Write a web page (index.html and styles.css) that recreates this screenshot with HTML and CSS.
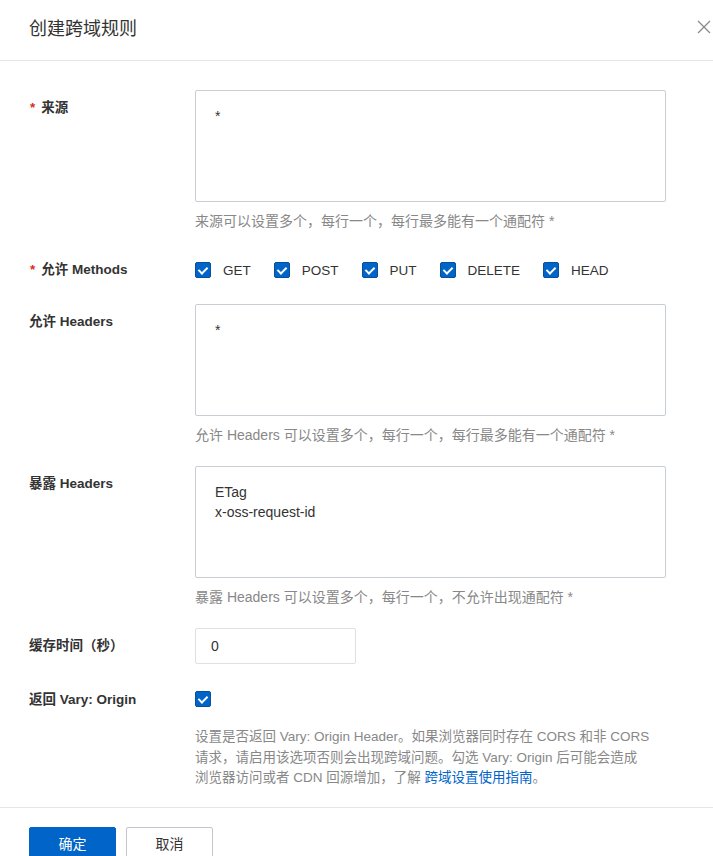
FILE: index.html
```html
<!DOCTYPE html>
<html lang="zh-CN">
<head>
  <meta charset="UTF-8">
  <meta name="viewport" content="width=device-width, initial-scale=1.0">
  <title>创建跨域规则</title>
  <link rel="stylesheet" href="styles.css">
</head>
<body>
  <div class="dialog">
    <div class="dialog-header">
      <h2>创建跨域规则</h2>
      <span class="close">
        <svg width="14" height="14" viewBox="0 0 14 14"><path d="M1 1L13 13M13 1L1 13" stroke="#8a8a8a" stroke-width="1.3" fill="none"/></svg>
      </span>
    </div>

    <div class="dialog-body">
      <div class="form-item">
        <label class="label required">来源</label>
        <div class="control">
          <div class="textarea">*</div>
          <div class="help">来源可以设置多个，每行一个，每行最多能有一个通配符 *</div>
        </div>
      </div>

      <div class="form-item row methods">
        <label class="label required">允许 Methods</label>
        <div class="control checks">
          <span class="check"><i class="box"></i>GET</span>
          <span class="check"><i class="box"></i>POST</span>
          <span class="check"><i class="box"></i>PUT</span>
          <span class="check"><i class="box"></i>DELETE</span>
          <span class="check"><i class="box"></i>HEAD</span>
        </div>
      </div>

      <div class="form-item">
        <label class="label">允许 Headers</label>
        <div class="control">
          <div class="textarea">*</div>
          <div class="help">允许 Headers 可以设置多个，每行一个，每行最多能有一个通配符 *</div>
        </div>
      </div>

      <div class="form-item">
        <label class="label">暴露 Headers</label>
        <div class="control">
          <div class="textarea">ETag<br>x-oss-request-id</div>
          <div class="help">暴露 Headers 可以设置多个，每行一个，不允许出现通配符 *</div>
        </div>
      </div>

      <div class="form-item">
        <label class="label">缓存时间（秒）</label>
        <div class="control">
          <div class="input">0</div>
        </div>
      </div>

      <div class="form-item row last">
        <label class="label">返回 Vary: Origin</label>
        <div class="control">
          <span class="check"><i class="box"></i></span>
        </div>
      </div>
      <div class="form-item note">
        <div class="label"></div>
        <div class="control">
          <p class="desc">设置是否返回 Vary: Origin Header。如果浏览器同时存在 CORS 和非 CORS<br>请求，请启用该选项否则会出现跨域问题。勾选 Vary: Origin 后可能会造成<br>浏览器访问或者 CDN 回源增加，了解 <a href="#">跨域设置使用指南</a>。</p>
        </div>
      </div>
    </div>

    <div class="dialog-footer">
      <button class="btn primary">确定</button>
      <button class="btn">取消</button>
    </div>
  </div>
</body>
</html>
```

FILE: styles.css
```css
body {
  margin: 0;
  background: #fff;
  color: #333;
  font-family: "Liberation Sans", "Noto Sans CJK SC", sans-serif;
  font-size: 14px;
}
.dialog {
  width: 713px;
  height: 856px;
  overflow: hidden;
}
.dialog-header {
  display: flex;
  justify-content: space-between;
  align-items: center;
  height: 60px;
  padding: 0 2px 0 29px;
  border-bottom: 1px solid #e6e6e6;
}
.dialog-header h2 {
  margin: 0 0 7px;
  font-size: 18px;
  font-weight: normal;
  color: #333;
}
.close {
  display: flex;
  margin-bottom: 6px;
}
.dialog-body {
  padding: 29px 47px 0 29px;
}
.form-item {
  display: flex;
  margin-bottom: 18px;
}
.label {
  width: 166px;
  flex-shrink: 0;
  line-height: 36px;
  font-size: 13.5px;
  font-weight: 600;
  color: #333;
}
.label.required::before {
  content: "*";
  color: #d93026;
  margin: 0 6px 0 1px;
}
.control {
  flex: 1;
}
.textarea {
  height: 112px;
  box-sizing: border-box;
  border: 1px solid #c9ced4;
  border-radius: 2px;
  padding: 15px 19px;
  line-height: 20px;
  font-size: 14px;
  color: #333;
}
.help {
  padding: 9px 0 3px;
  line-height: 20px;
  font-size: 14px;
  color: #888;
}
.input {
  width: 161px;
  height: 36px;
  box-sizing: border-box;
  border: 1px solid #e0e0e0;
  border-radius: 2px;
  padding: 0 15px;
  line-height: 34px;
  color: #333;
}
.row {
  height: 36px;
  align-items: center;
}
.form-item.methods {
  margin-bottom: 16px;
}
.checks {
  display: flex;
  align-items: center;
}
.check {
  display: inline-flex;
  align-items: center;
  margin-right: 23px;
  font-size: 13.5px;
  color: #333;
}
.box {
  position: relative;
  width: 16px;
  height: 16px;
  box-sizing: border-box;
  margin-right: 12px;
  background: #0064c8;
  border: 1px solid #0a4f9a;
  border-radius: 2px;
}
.box::after {
  content: "";
  position: absolute;
  left: 4px;
  top: 2px;
  width: 4px;
  height: 7px;
  border: solid #fff;
  border-width: 0 2px 2px 0;
  transform: rotate(45deg);
}
.form-item.last {
  margin-top: 1px;
  margin-bottom: 9px;
}
.note {
  margin-bottom: 0;
}
.desc {
  margin: 0;
  font-size: 13.5px;
  line-height: 20.6px;
  color: #888;
}
.desc a {
  color: #0064c8;
  text-decoration: none;
}
.dialog-footer {
  margin-top: 18px;
  border-top: 1px solid #e6e6e6;
  padding: 19px 29px 0;
  display: flex;
  gap: 10px;
}
.btn {
  width: 87px;
  height: 32px;
  border: 1px solid #c4c6cf;
  border-radius: 2px;
  background: #fff;
  color: #333;
  font-family: inherit;
  font-size: 14px;
  cursor: pointer;
}
.btn.primary {
  background: #0064c8;
  border-color: #0064c8;
  color: #fff;
}
```
